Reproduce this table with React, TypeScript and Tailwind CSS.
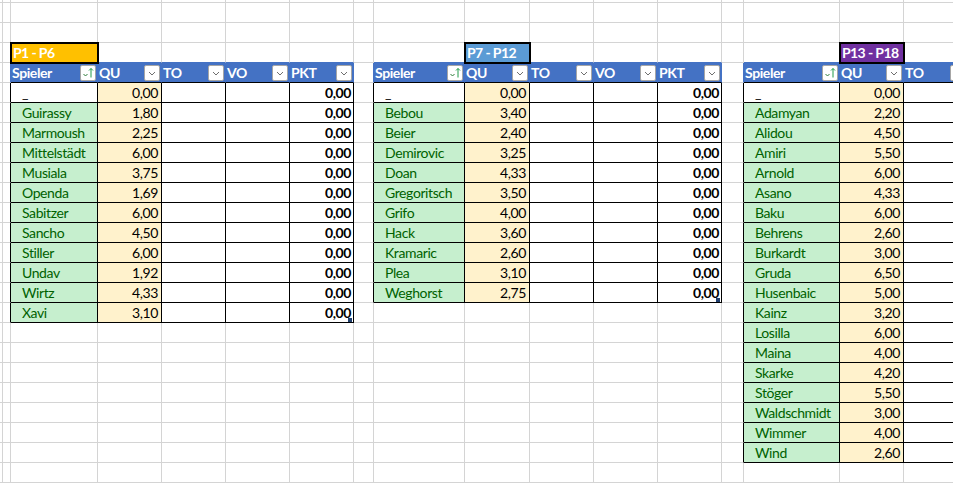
import React from "react";

type Table = {
  start: number;
  names: string[];
  qu: string[];
  title: string;
  titleCol: number;
  titleBg: string;
};

const HEADER = 4;
const FIRST = 5;
const NCOLS = 17;
const NROWS = 25;

const tables: Table[] = [
  {
    start: 2,
    names: ["_", "Guirassy", "Marmoush", "Mittelstädt", "Musiala", "Openda", "Sabitzer", "Sancho", "Stiller", "Undav", "Wirtz", "Xavi"],
    qu: ["0,00", "1,80", "2,25", "6,00", "3,75", "1,69", "6,00", "4,50", "6,00", "1,92", "4,33", "3,10"],
    title: "P1 - P6",
    titleCol: 0,
    titleBg: "bg-[#ffc000]",
  },
  {
    start: 8,
    names: ["_", "Bebou", "Beier", "Demirovic", "Doan", "Gregoritsch", "Grifo", "Hack", "Kramaric", "Plea", "Weghorst"],
    qu: ["0,00", "3,40", "2,40", "3,25", "4,33", "3,50", "4,00", "3,60", "2,60", "3,10", "2,75"],
    title: "P7 - P12",
    titleCol: 1,
    titleBg: "bg-[#5b9bd5]",
  },
  {
    start: 14,
    names: ["_", "Adamyan", "Alidou", "Amiri", "Arnold", "Asano", "Baku", "Behrens", "Burkardt", "Gruda", "Husenbaic", "Kainz", "Losilla", "Maina", "Skarke", "Stöger", "Waldschmidt", "Wimmer", "Wind"],
    qu: ["0,00", "2,20", "4,50", "5,50", "6,00", "4,33", "6,00", "2,60", "3,00", "6,50", "5,00", "3,20", "6,00", "4,00", "4,20", "5,50", "3,00", "4,00", "2,60"],
    title: "P13 - P18",
    titleCol: 1,
    titleBg: "bg-[#7030a0]",
  },
];

const HEADERS = ["Spieler", "QU", "TO", "VO", "PKT"];

function findTable(c: number): Table | undefined {
  return tables.find((t) => c >= t.start && c < t.start + 5);
}

function isData(r: number, c: number): boolean {
  const t = findTable(c);
  if (!t) return false;
  return r >= FIRST && r < FIRST + t.names.length;
}

function isHeader(r: number, c: number): boolean {
  return r === HEADER && !!findTable(c);
}

function rightCls(r: number, c: number): string {
  if (isData(r, c) || isData(r, c + 1)) return "border-r-black";
  if (isHeader(r, c) || isHeader(r, c + 1)) return "border-r-[#4472c4]";
  return "border-r-[#d4d4d4]";
}

function bottomCls(r: number, c: number): string {
  if (isData(r, c) || isData(r + 1, c)) return "border-b-black";
  if (isHeader(r, c) || isHeader(r + 1, c)) return "border-b-[#4472c4]";
  return "border-b-[#d4d4d4]";
}

function FilterButton({ sorted }: { sorted?: boolean }) {
  return (
    <div className="box-border w-[16px] h-[16px] shrink-0 bg-white border border-[#a6a6a6] rounded-[2px] flex items-center justify-center">
      <svg width="14" height="14" viewBox="0 0 14 14">
        {sorted ? (
          <>
            <polyline points="2.5,8 4.5,10 6.5,8" fill="none" stroke="#2f7d3b" strokeWidth="1" />
            <line x1="10" y1="2.5" x2="10" y2="11.5" stroke="#1f9a48" strokeWidth="1" />
            <polyline points="8,4.5 10,2.5 12,4.5" fill="none" stroke="#1f9a48" strokeWidth="1" />
          </>
        ) : (
          <polyline points="4,6 7,9 10,6" fill="none" stroke="#6f6f6f" strokeWidth="1" />
        )}
      </svg>
    </div>
  );
}

function Cell({ r, c }: { r: number; c: number }) {
  const base = "box-border border-r border-b min-w-0 overflow-hidden whitespace-nowrap " + rightCls(r, c) + " " + bottomCls(r, c);
  const t = findTable(c);

  if (t && r === HEADER - 1 && c === t.start + t.titleCol) {
    return (
      <div className={base + " relative z-10 outline-2 outline-black -outline-offset-1 flex items-center pl-[2px] font-bold text-white tracking-[-0.6px] " + t.titleBg}>
        {t.title}
      </div>
    );
  }

  if (t && r === HEADER) {
    const k = c - t.start;
    return (
      <div className={base + " bg-[#4472c4] flex items-center pl-[1px] pr-[1px] font-bold text-white"}>
        <span className="flex-1">{HEADERS[k]}</span>
        <FilterButton sorted={k === 0} />
      </div>
    );
  }

  if (t && isData(r, c)) {
    const k = c - t.start;
    const i = r - FIRST;
    const last = i === t.names.length - 1;
    if (k === 0) {
      return (
        <div className={base + " pl-[11px] " + (i === 0 ? "bg-white text-black" : "bg-[#c6efce] text-[#006100]")}>
          {t.names[i]}
        </div>
      );
    }
    if (k === 1) {
      return <div className={base + " bg-[#fff2cc] text-black text-right pr-[3px]"}>{t.qu[i]}</div>;
    }
    if (k === 4) {
      return (
        <div className={base + " relative bg-white text-black font-bold text-right pr-[2px]"}>
          0,00
          {last && <div className="absolute right-[1px] bottom-0 w-[4px] h-[4px] bg-[#1f3f6e]" />}
        </div>
      );
    }
    return <div className={base + " bg-white"} />;
  }

  return <div className={base + " bg-white"} />;
}

export default function App() {
  const cells: React.ReactNode[] = [];
  for (let r = 0; r < NROWS; r++) {
    for (let c = 0; c < NCOLS; c++) {
      cells.push(<Cell key={r + "-" + c} r={r} c={c} />);
    }
  }
  return (
    <div className="w-[953px] h-[483px] overflow-hidden bg-white font-['Lato',sans-serif] text-[14px] leading-[19px] tracking-[-0.4px]">
      <div className="grid grid-cols-[3px_8px_87px_64px_64px_64px_64px_20px_91px_65px_64px_64px_64px_22px_96px_64px_64px] grid-rows-[3px_repeat(24,20px)] w-[968px]">
        {cells}
      </div>
    </div>
  );
}
